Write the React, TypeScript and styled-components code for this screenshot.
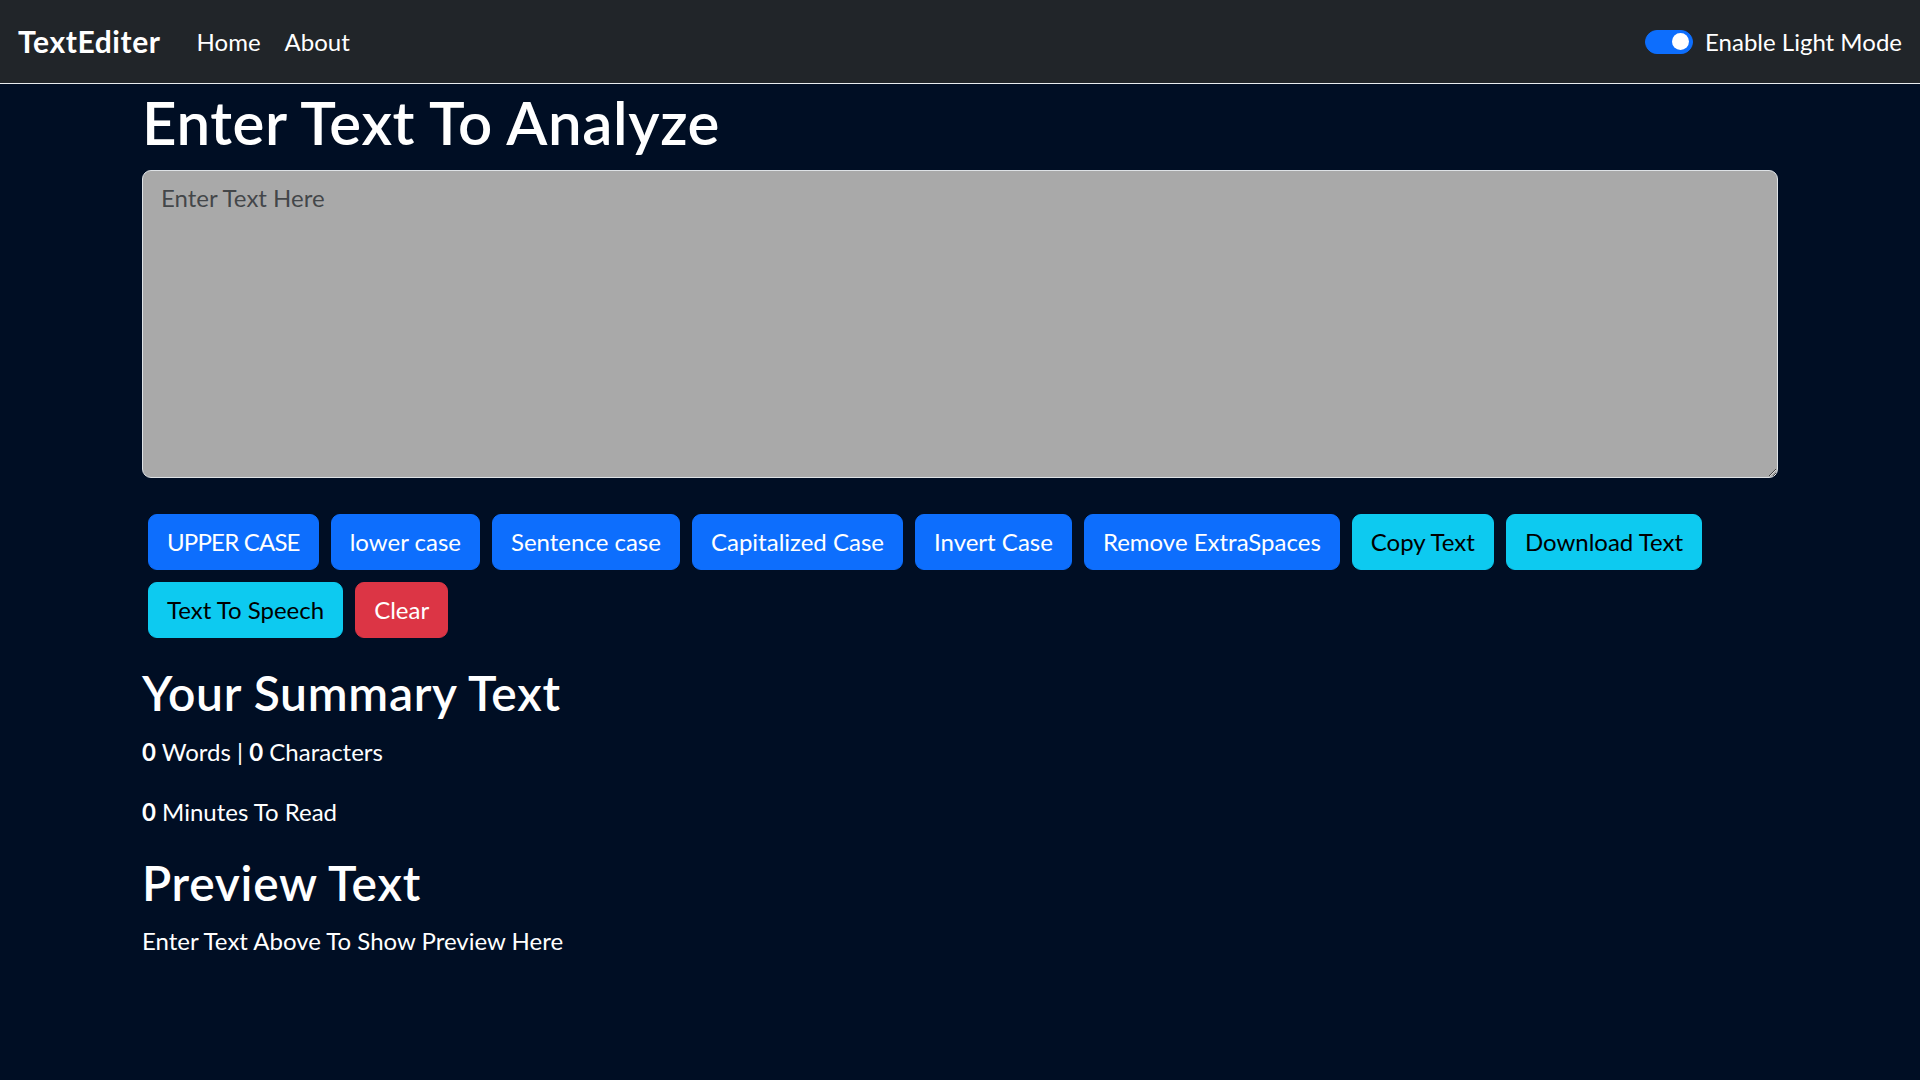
import React, { useState } from "react";
import styled, { createGlobalStyle } from "styled-components";

const FONT = `"Segoe UI", Lato, "Liberation Sans", sans-serif`;

const GlobalStyle = createGlobalStyle`
  * { box-sizing: border-box; }
  html, body { margin: 0; padding: 0; }
  body {
    background: #000e24;
    color: #ffffff;
    font-family: ${FONT};
    font-size: 24px;
    line-height: 1.5;
    min-height: 1080px;
  }
`;

const NavBar = styled.nav`
  height: 84px;
  background: #212529;
  border-bottom: 1px solid #e9ecef;
  display: flex;
  align-items: center;
  padding: 0 18px;
`;

const Brand = styled.a`
  font-size: 30px;
  font-weight: 700;
  letter-spacing: 0.6px;
  color: #fff;
  text-decoration: none;
  margin-right: 24px;
  line-height: 1.5;
`;

const NavLinks = styled.ul`
  list-style: none;
  margin: 0;
  padding: 0;
  display: flex;
`;

const NavLink = styled.a`
  display: block;
  padding: 12px;
  color: #fff;
  text-decoration: none;
  font-size: 24px;
`;

const SwitchWrap = styled.label`
  margin-left: auto;
  display: flex;
  align-items: center;
  gap: 12px;
  color: #fff;
  font-size: 24px;
  cursor: pointer;
`;

const SwitchTrack = styled.span<{ $on: boolean }>`
  width: 48px;
  height: 24px;
  border-radius: 12px;
  background: ${(p) => (p.$on ? "#0d6efd" : "transparent")};
  border: 1px solid ${(p) => (p.$on ? "#0d6efd" : "#dee2e6")};
  display: flex;
  align-items: center;
  justify-content: ${(p) => (p.$on ? "flex-end" : "flex-start")};
  padding: 0 3px;
`;

const SwitchKnob = styled.span`
  width: 17px;
  height: 17px;
  border-radius: 50%;
  background: #fff;
`;

const Container = styled.main`
  width: 1636px;
  margin: 0 auto;
  padding-top: 2px;
`;

const Title = styled.h1`
  font-size: 60px;
  font-weight: 600;
  letter-spacing: 0.6px;
  line-height: 1.2;
  margin: 0 0 12px;
`;

const TextArea = styled.textarea`
  display: block;
  width: 100%;
  height: 308px;
  padding: 9px 18px;
  font-family: ${FONT};
  font-size: 24px;
  line-height: 1.5;
  color: #fff;
  background: #a9a9a9;
  border: 1px solid #dee2e6;
  border-radius: 9px;
  outline: none;
  &::placeholder {
    color: rgba(33, 37, 41, 0.75);
  }
`;

const ButtonGroup = styled.div`
  display: flex;
  flex-wrap: wrap;
  margin-top: 30px;
`;

const variants = {
  primary: { bg: "#0d6efd", fg: "#ffffff" },
  info: { bg: "#0dcaf0", fg: "#000000" },
  danger: { bg: "#dc3545", fg: "#ffffff" },
};

const Button = styled.button<{ $variant: keyof typeof variants; $caps?: boolean }>`
  margin: 6px;
  padding: 9px 18px;
  font-family: ${FONT};
  font-size: 24px;
  line-height: 1.5;
  letter-spacing: ${(p) => (p.$caps ? "-0.8px" : "0")};
  border-radius: 9px;
  border: 1px solid ${(p) => variants[p.$variant].bg};
  background: ${(p) => variants[p.$variant].bg};
  color: ${(p) => variants[p.$variant].fg};
  cursor: pointer;
`;

const Section = styled.section`
  margin-top: 20px;
`;

const SubTitle = styled.h2`
  font-size: 48px;
  font-weight: 600;
  letter-spacing: 0.7px;
  line-height: 1.2;
  margin: 0 0 12px;
`;

const Para = styled.p`
  margin: 0 0 24px;
  font-size: 24px;
  line-height: 1.5;
`;

export default function App() {
  const [text, setText] = useState("");
  const [on, setOn] = useState(true);
  const words = text.split(/\s+/).filter((w) => w.length > 0).length;
  const chars = text.length;
  const minutes = 0.008 * words;

  const buttons: { label: string; v: keyof typeof variants; caps?: boolean }[] = [
    { label: "UPPER CASE", v: "primary", caps: true },
    { label: "lower case", v: "primary" },
    { label: "Sentence case", v: "primary" },
    { label: "Capitalized Case", v: "primary" },
    { label: "Invert Case", v: "primary" },
    { label: "Remove ExtraSpaces", v: "primary" },
    { label: "Copy Text", v: "info" },
    { label: "Download Text", v: "info" },
    { label: "Text To Speech", v: "info" },
    { label: "Clear", v: "danger" },
  ];

  return (
    <>
      <GlobalStyle />
      <NavBar>
        <Brand href="#">TextEditer</Brand>
        <NavLinks>
          <li>
            <NavLink href="#">Home</NavLink>
          </li>
          <li>
            <NavLink href="#">About</NavLink>
          </li>
        </NavLinks>
        <SwitchWrap onClick={() => setOn(!on)}>
          <SwitchTrack $on={on}>
            <SwitchKnob />
          </SwitchTrack>
          Enable Light Mode
        </SwitchWrap>
      </NavBar>
      <Container>
        <Title>Enter Text To Analyze</Title>
        <TextArea
          rows={8}
          placeholder="Enter Text Here"
          value={text}
          onChange={(e) => setText(e.target.value)}
        />
        <ButtonGroup>
          {buttons.map((b) => (
            <Button key={b.label} $variant={b.v} $caps={b.caps}>
              {b.label}
            </Button>
          ))}
        </ButtonGroup>
        <Section>
          <SubTitle>Your Summary Text</SubTitle>
          <Para>
            <b>{words}</b> Words | <b>{chars}</b> Characters
          </Para>
          <Para>
            <b>{minutes}</b> Minutes To Read
          </Para>
          <SubTitle>Preview Text</SubTitle>
          <Para>{text.length > 0 ? text : "Enter Text Above To Show Preview Here"}</Para>
        </Section>
      </Container>
    </>
  );
}
